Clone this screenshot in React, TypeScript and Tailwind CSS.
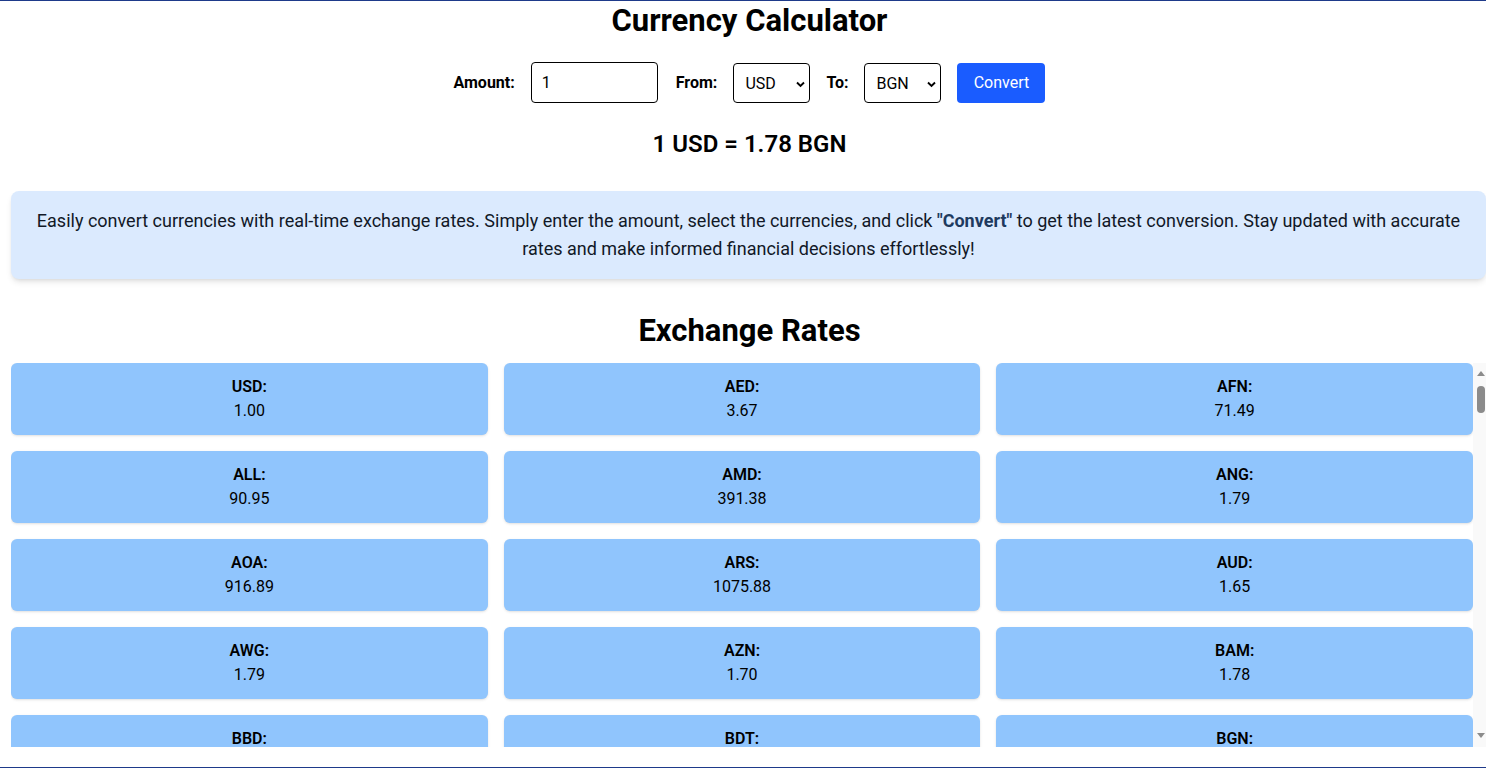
import { useState } from "react"

const raw = "USD 1.00,AED 3.67,AFN 71.49,ALL 90.95,AMD 391.38,ANG 1.79,AOA 916.89,ARS 1075.88,AUD 1.65,AWG 1.79,AZN 1.70,BAM 1.78,BBD 2.00,BDT 119.50,BGN 1.78,BHD 0.38,BIF 2921.54,BMD 1.00,BND 1.32,BOB 6.92,BRL 5.76,BSD 1.00,BTN 84.08,BWP 13.48,BYN 3.27,BZD 2.00,CAD 1.39,CDF 2842.12,CHF 0.86,CLP 963.21,CNY 7.12,COP 4407.53,CRC 511.63,CUP 24.00,CVE 100.43,CZK 23.34,DJF 177.72,DKK 6.80,DOP 60.28,DZD 133.41,EGP 48.73,ERN 15.00,ETB 121.07,EUR 0.91,FJD 2.26,FKP 0.77,FOK 6.80,GBP 0.77,GEL 2.73,GGP 0.77,GHS 16.15,GIP 0.77,GMD 71.55,GNF 8618.27,GTQ 7.73,GYD 209.22,HKD 7.77,HNL 25.13,HRK 6.86,HTG 131.71,HUF 375.17,IDR 15742.61,ILS 3.78,IMP 0.77,INR 84.08,IQD 1310.23,IRR 42052.44,ISK 137.07,JEP 0.77,JMD 158.54,JOD 0.71,JPY 152.26,KES 129.21,KGS 85.83,KHR 4063.22,KID 1.65,KMF 448.14,KRW 1381.44,KWD 0.31,KYD 0.83,KZT 489.57,LAK 21952.05,LBP 89500.00,LKR 293.24,LRD 191.22,LSL 17.69,LYD 4.81,MAD 9.87,MDL 17.89,MGA 4603.72,MKD 56.32,MMK 2098.36,MNT 3398.32,MOP 8.01,MRU 39.82,MUR 45.89,MVR 15.42,MWK 1738.51,MXN 20.09,MYR 4.38,MZN 63.88,NAD 17.69,NGN 1641.57,NIO 36.78,NOK 10.98,NPR 134.52,NZD 1.67,OMR 0.38,PAB 1.00,PEN 3.77,PGK 3.97,PHP 58.27,PKR 277.65,PLN 4.01,PYG 7978.47,QAR 3.64,RON 4.55,RSD 106.98,RUB 97.32,RWF 1370.28,SAR 3.75,SBD 8.38,SCR 13.56,SDG 458.33,SEK 10.66,SGD 1.32,SHP 0.77,SLE 22.66,SLL 22659.29,SOS 571.55,SRD 34.54,SSP 3142.66,STN 22.30,SYP 12919.01,SZL 17.69,THB 33.69,TJS 10.66,TMT 3.50,TND 3.10,TOP 2.35,TRY 34.30,TTD 6.77,TVD 1.65,TWD 32.03,TZS 2719.89,UAH 41.21,UGX 3673.52,UYU 41.66,UZS 12811.06,VES 40.85,VND 25328.69,VUV 119.98,WST 2.73,XAF 597.52,XCD 2.70,XDR 0.75,XOF 597.52,XPF 108.70,YER 250.27,ZAR 17.69,ZMW 26.88,ZWL 26.45"

const rates = raw.split(",").map((r) => {
    const [code, value] = r.split(" ")
    return { code, value }
})

const CurrencySelect = ({ value, onChange }: { value: string; onChange: (v: string) => void }) => (
    <div className="relative">
        <select
            value={value}
            onChange={(e) => onChange(e.target.value)}
            className="appearance-none w-[77px] h-[40px] pl-[11px] pt-[2px] border border-black rounded text-[16px] bg-white"
        >
            {rates.map((r) => <option key={r.code}>{r.code}</option>)}
        </select>
        <svg className="absolute right-[5px] top-[18px] w-[9px] h-[7px] pointer-events-none" viewBox="0 0 9 7">
            <path d="M1 1.5 L4.5 5 L8 1.5" fill="none" stroke="#000" strokeWidth="1.9" />
        </svg>
    </div>
)

export default function App() {
    const [amount, setAmount] = useState("1")
    const [from, setFrom] = useState("USD")
    const [to, setTo] = useState("BGN")

    return (
        <div className="h-screen overflow-hidden border-t border-b border-[#1e3a8a] bg-white text-black font-['Roboto',sans-serif]">
            <div className="ml-[11px] w-[1477px] flex flex-col items-center">
                <h1 className="mt-[2px] text-[31px] leading-[36px] font-bold">Currency Calculator</h1>

                <div className="mt-[23px] flex items-center gap-4">
                    <label className="text-[16px] font-bold">Amount:</label>
                    <input
                        value={amount}
                        onChange={(e) => setAmount(e.target.value)}
                        className="w-[127px] h-[41px] px-[10px] border border-black rounded text-[16px] outline-none"
                    />
                    <label className="ml-[2px] text-[16px] font-bold">From:</label>
                    <CurrencySelect value={from} onChange={setFrom} />
                    <label className="text-[16px] font-bold">To:</label>
                    <CurrencySelect value={to} onChange={setTo} />
                    <button className="w-[88px] h-[40px] rounded bg-[#1a5cff] text-white text-[16px]">Convert</button>
                </div>

                <p className="mt-[25px] text-[24px] leading-[32px] font-semibold">1 USD = 1.78 BGN</p>

                <div className="mt-[31px] self-start w-[1475px] rounded-lg bg-[#dbeafe] shadow-md px-4 py-4 text-center text-[18px] leading-[28px] text-[#111827]">
                    Easily convert currencies with real-time exchange rates. Simply enter the amount, select the currencies, and click{" "}
                    <strong className="text-[#1e3a5f]">"Convert"</strong> to get the latest conversion. Stay updated with accurate rates and make informed financial decisions effortlessly!
                </div>

                <h2 className="mt-[34px] text-[31px] leading-[36px] font-bold">Exchange Rates</h2>

                <div className="relative mt-[14px] w-full">
                    <div className="h-[384px] overflow-y-auto [scrollbar-width:none]">
                        <div className="mr-[15px] grid grid-cols-3 gap-4">
                            {rates.map((r) => (
                                <div key={r.code} className="h-[72px] p-3 rounded-md bg-[#90c5fd] shadow text-center text-[16px] leading-[24px]">
                                    <div className="font-semibold">{r.code}:</div>
                                    <div>{r.value}</div>
                                </div>
                            ))}
                        </div>
                    </div>
                    {/* scrollbar */}
                    <div className="absolute right-0 top-0 bottom-0 w-[15px] bg-[#f9f9f9] flex flex-col items-center pointer-events-none">
                        <svg className="mt-[8px] w-[8px] h-[5px]" viewBox="0 0 8 5">
                            <polygon points="4,0 8,5 0,5" fill="#8b8b8b" />
                        </svg>
                        <div className="mt-[10px] w-[8px] h-[27px] rounded-full bg-[#8b8b8b]" />
                        <svg className="mt-auto mb-[9px] w-[8px] h-[5px]" viewBox="0 0 8 5">
                            <polygon points="0,0 8,0 4,5" fill="#8b8b8b" />
                        </svg>
                    </div>
                </div>
            </div>
        </div>
    )
}
